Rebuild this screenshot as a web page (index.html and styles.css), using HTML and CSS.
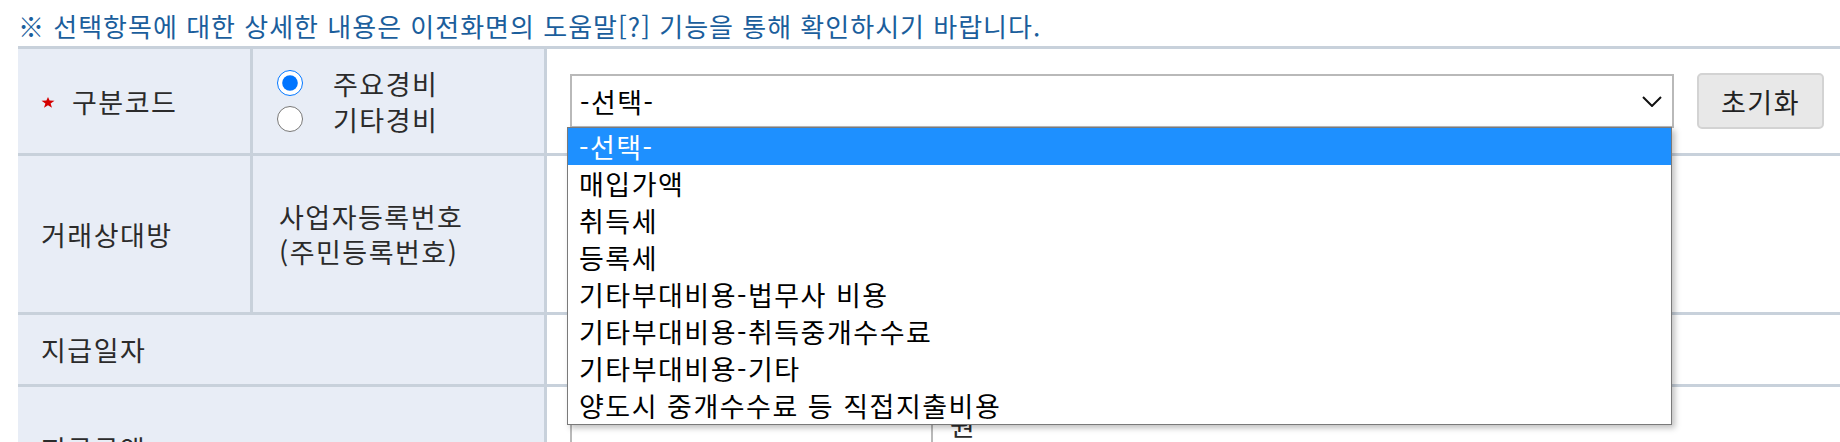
FILE: index.html
```html
<!DOCTYPE html>
<html lang="ko">
<head>
<meta charset="utf-8">
<title>필요경비 입력</title>
<link rel="stylesheet" href="styles.css">
</head>
<body>
<div class="page">
  <p class="notice">※ 선택항목에 대한 상세한 내용은 이전화면의 도움말[?] 기능을 통해 확인하시기 바랍니다.</p>
  <div class="form">
    <div class="cell head row1"><svg class="req" width="14" height="11" viewBox="0 0 14 11"><polygon points="7,0 8.6,3.6 13.5,3.8 9.6,6.4 11,10.8 7,8.3 3,10.8 4.4,6.4 0.5,3.8 5.4,3.6" fill="#d40000"/></svg><span>구분코드</span></div>
    <div class="cell head row1 radios">
      <label class="radio"><input type="radio" name="kind" checked><span>주요경비</span></label>
      <label class="radio"><input type="radio" name="kind"><span>기타경비</span></label>
    </div>
    <div class="cell body row1 selrow">
      <div class="select">
        <span>-선택-</span>
        <svg class="chev" width="20" height="11" viewBox="0 0 20 11"><polyline points="1,1 10,10 19,1" fill="none" stroke="#111" stroke-width="2"/></svg>
      </div>
      <button class="btn" type="button">초기화</button>
    </div>

    <div class="cell head row2">거래상대방</div>
    <div class="cell head row2 sub">사업자등록번호<br>(주민등록번호)</div>
    <div class="cell body row2"></div>

    <div class="cell head row3 span2">지급일자</div>
    <div class="cell body row3"></div>

    <div class="cell head row4 span2">지급금액</div>
    <div class="cell body row4 amount">
      <div class="input"></div>
      <span class="won">원</span>
    </div>

    <ul class="dropdown">
      <li class="on">-선택-</li>
      <li>매입가액</li>
      <li>취득세</li>
      <li>등록세</li>
      <li>기타부대비용-법무사 비용</li>
      <li>기타부대비용-취득중개수수료</li>
      <li>기타부대비용-기타</li>
      <li>양도시 중개수수료 등 직접지출비용</li>
    </ul>
  </div>
</div>
</body>
</html>
```

FILE: styles.css
```css
* { box-sizing: border-box; }
html, body { margin: 0; padding: 0; background: #fff; overflow: hidden; }
body {
  font-family: "Noto Sans CJK KR", "Noto Sans", sans-serif;
  color: #2b2b2b;
  width: 1840px;
  height: 442px;
}
.page { padding-left: 18px; }
.notice {
  margin: 0;
  height: 46px;
  padding-top: 6px;
  line-height: 40px;
  font-size: 26px;
  letter-spacing: 1px;
  color: #1b5e9c;
  white-space: nowrap;
}
.form {
  position: relative;
  display: grid;
  grid-template-columns: 235px 294px 1fr;
  grid-template-rows: 107px 159px 72px 130px;
  border-top: 3px solid #c8d1db;
}
.cell {
  border-bottom: 3px solid #c8d1db;
  display: flex;
  align-items: center;
  font-size: 27px;
  letter-spacing: 1.5px;
}
.head {
  background: #e8edf6;
  border-right: 3px solid #c8d1db;
  padding-left: 23px;
}
.body { background: #fff; }
.span2 { grid-column: span 2; }
.req { margin-right: 17px; margin-top: 2px; }
.radios {
  flex-direction: column;
  align-items: flex-start;
  justify-content: center;
  padding-left: 24px;
}
.radio {
  display: flex;
  align-items: center;
  height: 36px;
}
.radio input {
  width: 26px;
  height: 26px;
  margin: 0 30px 0 0;
}
.sub {
  padding-left: 26px;
  line-height: 35px;
}
.selrow { padding-left: 23px; }
.select {
  width: 1104px;
  height: 54px;
  border: 2px solid #b9b9b9;
  background: #fff;
  display: flex;
  align-items: center;
  justify-content: space-between;
  padding: 0 10px 0 8px;
  color: #000;
}
.btn {
  margin-left: 23px;
  width: 127px;
  height: 56px;
  background: #e8e8e8;
  border: 2px solid #d3d3d3;
  border-radius: 5px;
  font-family: inherit;
  font-size: 27px;
  letter-spacing: 1.5px;
  color: #222;
  padding: 0;
}
.row4 { align-items: flex-start; }
.head.row4 { padding-top: 42px; }
.amount { padding-left: 23px; padding-top: 13px; }
.input {
  width: 363px;
  height: 50px;
  border: 2px solid #b9b9b9;
}
.won { margin-left: 17px; line-height: 50px; }
.dropdown {
  position: absolute;
  left: 549px;
  top: 78px;
  width: 1105px;
  margin: 0;
  padding: 0;
  list-style: none;
  background: #fff;
  border: 1px solid #7a7a7a;
  box-shadow: 3px 3px 6px rgba(0,0,0,0.25);
}
.dropdown li {
  height: 37px;
  line-height: 37px;
  padding-left: 11px;
  font-size: 27px;
  letter-spacing: 1.5px;
  color: #000;
  white-space: nowrap;
}
.dropdown li.on { background: #1e90ff; color: #fff; }
```
